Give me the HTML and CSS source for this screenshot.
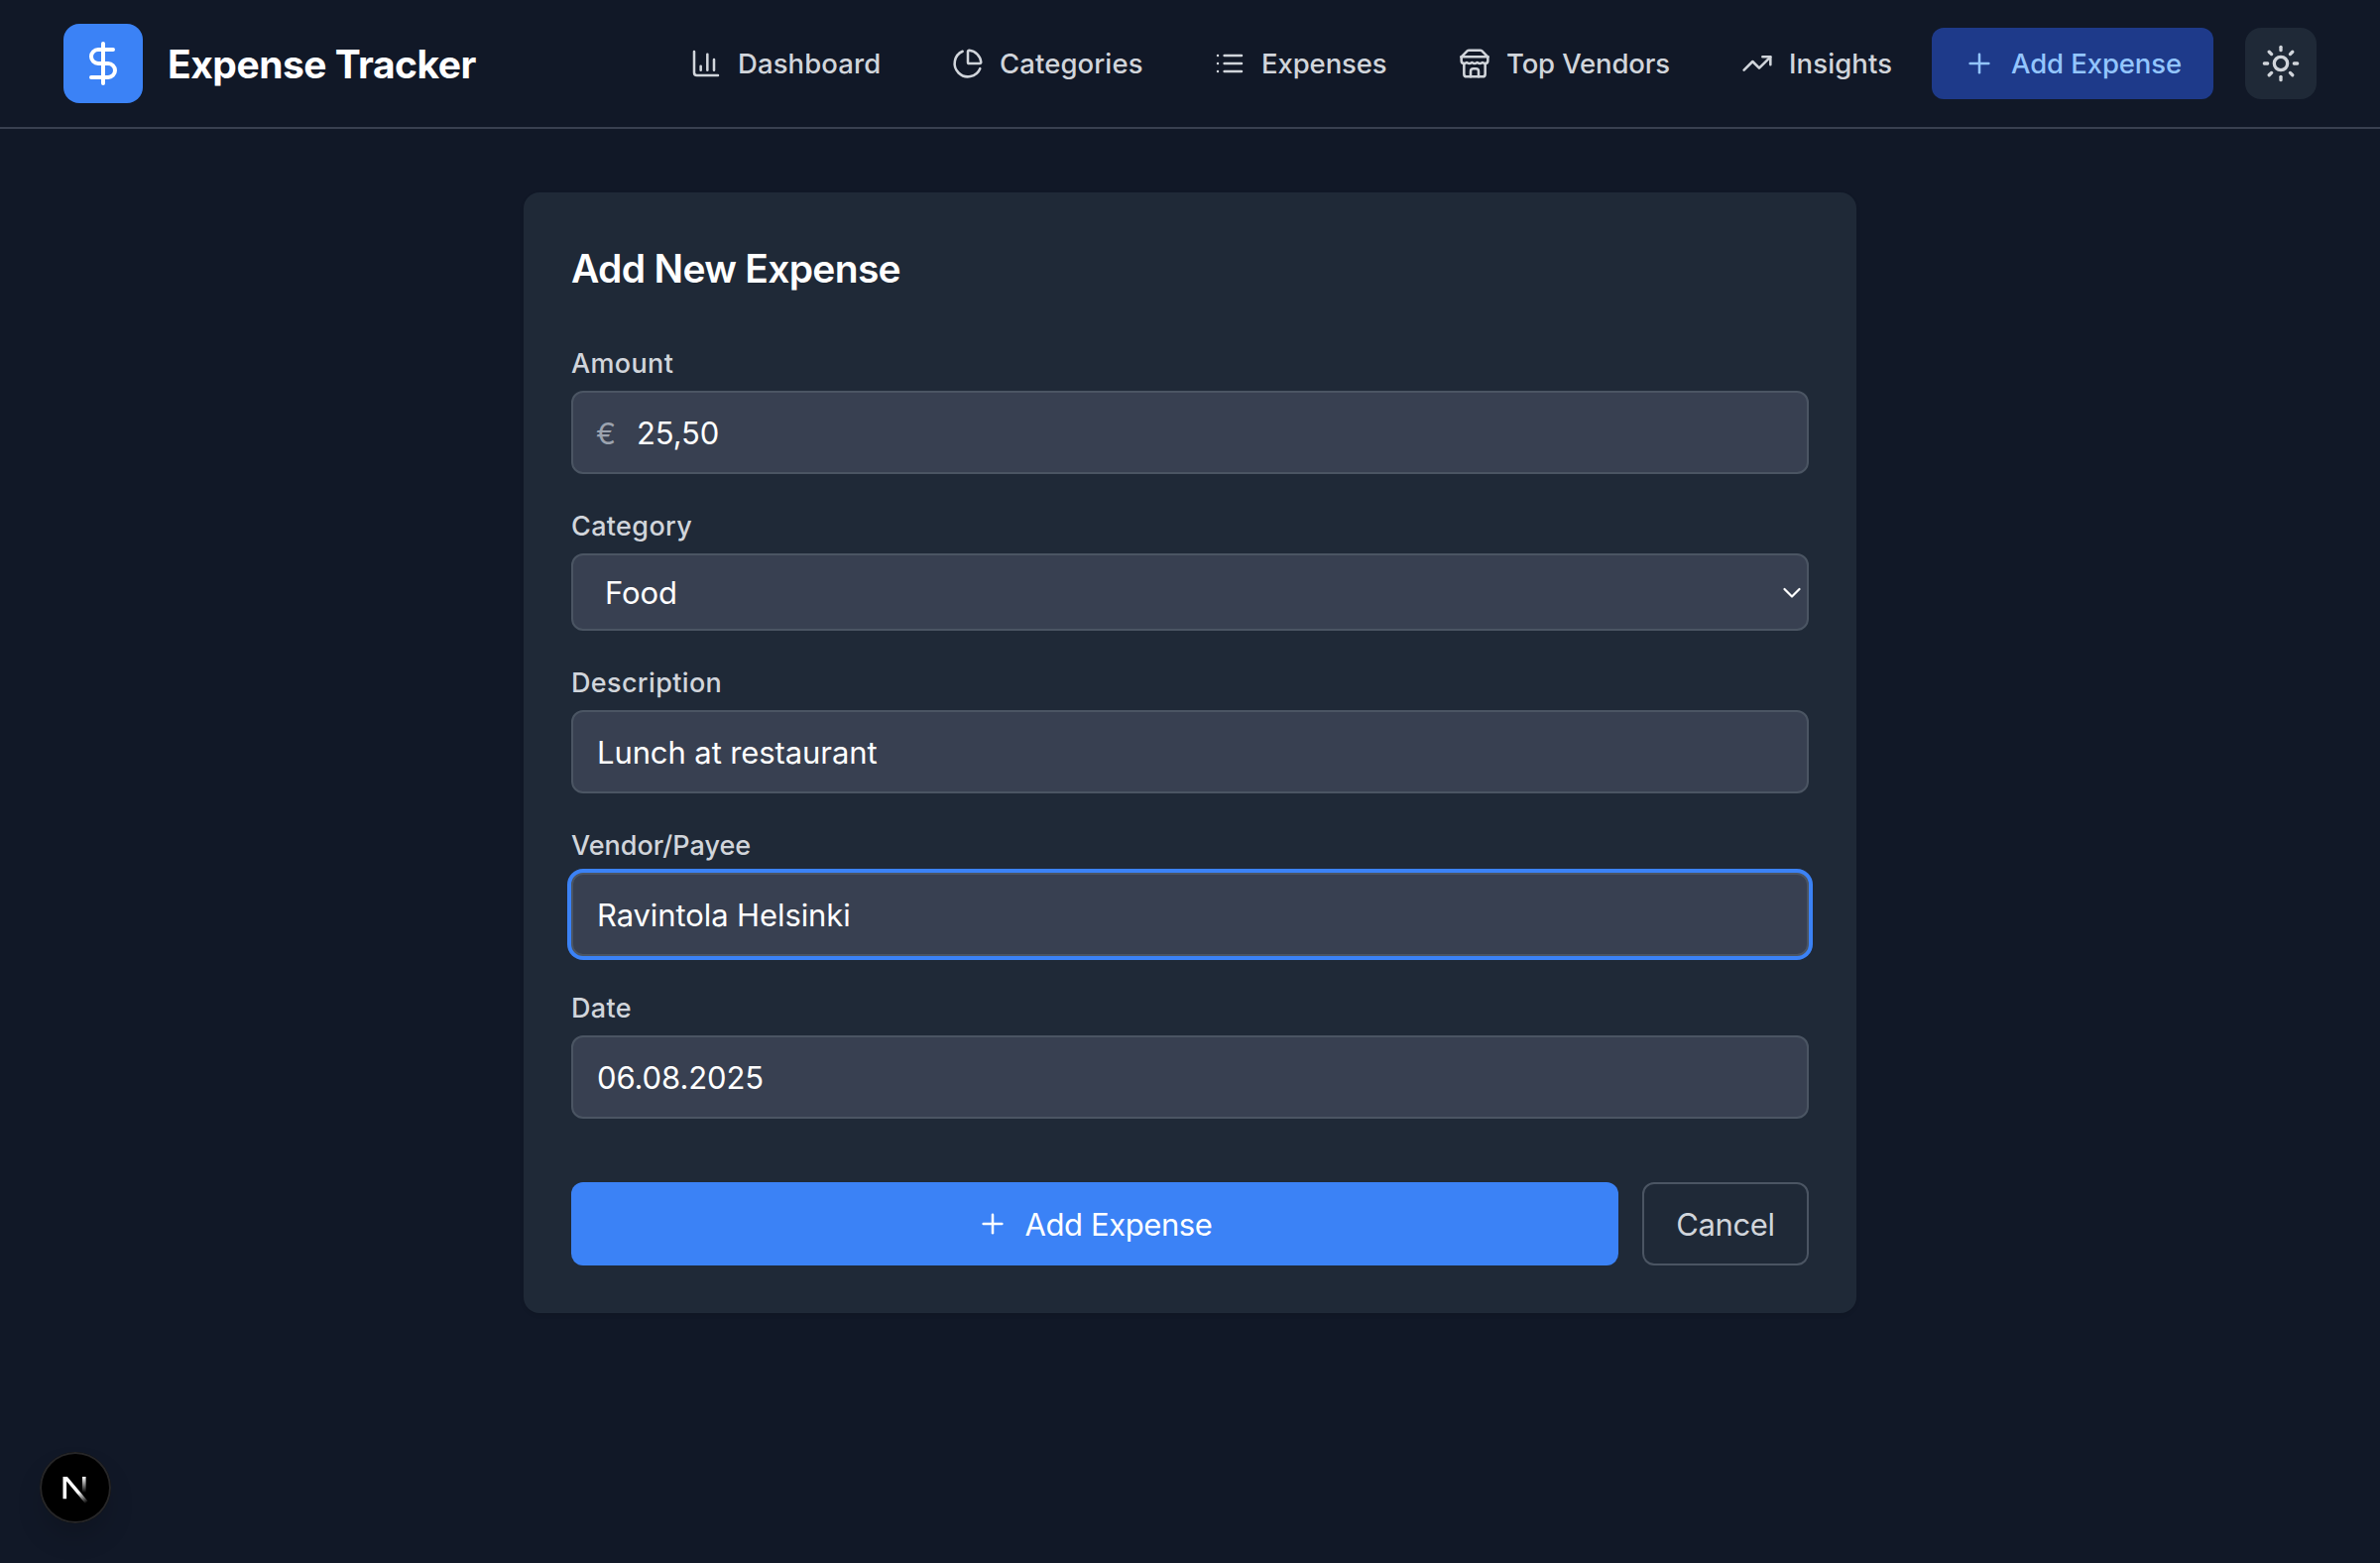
FILE: index.html
```html
<!DOCTYPE html>
<html lang="en">
<head>
<meta charset="utf-8">
<title>Expense Tracker</title>
<link rel="stylesheet" href="styles.css">
</head>
<body>
<header class="header">
  <div class="brand">
    <span class="brand-mark">
      <svg class="icon icon-lg" viewBox="0 0 24 24"><path d="M12 2v20"/><path d="M17 5H9.5a3.5 3.5 0 0 0 0 7h5a3.5 3.5 0 0 1 0 7H6"/></svg>
    </span>
    <span class="brand-name">Expense Tracker</span>
  </div>
  <nav class="nav">
    <a class="nav-link">
      <svg class="icon" viewBox="0 0 24 24"><path d="M3 3v16a2 2 0 0 0 2 2h16"/><path d="M18 17V9"/><path d="M13 17V5"/><path d="M8 17v-3"/></svg>
      <span class="nav-text dashboard">Dashboard</span>
    </a>
    <a class="nav-link">
      <svg class="icon" viewBox="0 0 24 24"><path d="M21 12c.552 0 1.005-.449.95-.998a10 10 0 0 0-8.953-8.951c-.55-.055-.998.398-.998.95v8a1 1 0 0 0 1 1z"/><path d="M21.21 15.89A10 10 0 1 1 8 2.83"/></svg>
      <span class="nav-text categories">Categories</span>
    </a>
    <a class="nav-link">
      <svg class="icon" viewBox="0 0 24 24"><path d="M3 12h.01"/><path d="M3 18h.01"/><path d="M3 6h.01"/><path d="M8 12h13"/><path d="M8 18h13"/><path d="M8 6h13"/></svg>
      <span class="nav-text expenses">Expenses</span>
    </a>
    <a class="nav-link">
      <svg class="icon" viewBox="0 0 24 24"><path d="m2 7 4.41-4.41A2 2 0 0 1 7.83 2h8.34a2 2 0 0 1 1.42.59L22 7"/><path d="M4 12v8a2 2 0 0 0 2 2h12a2 2 0 0 0 2-2v-8"/><path d="M15 22v-4a2 2 0 0 0-2-2h-2a2 2 0 0 0-2 2v4"/><path d="M2 7h20"/><path d="M22 7v3a2 2 0 0 1-2 2a2.7 2.7 0 0 1-1.59-.63.7.7 0 0 0-.82 0A2.7 2.7 0 0 1 16 12a2.7 2.7 0 0 1-1.59-.63.7.7 0 0 0-.82 0A2.7 2.7 0 0 1 12 12a2.7 2.7 0 0 1-1.59-.63.7.7 0 0 0-.82 0A2.7 2.7 0 0 1 8 12a2.7 2.7 0 0 1-1.59-.63.7.7 0 0 0-.82 0A2.7 2.7 0 0 1 4 12a2 2 0 0 1-2-2V7"/></svg>
      <span class="nav-text vendors">Top Vendors</span>
    </a>
    <a class="nav-link">
      <svg class="icon" viewBox="0 0 24 24"><path d="M16 7h6v6"/><path d="m22 7-8.5 8.5-5-5L2 17"/></svg>
      <span class="nav-text insights">Insights</span>
    </a>
    <a class="nav-link active">
      <svg class="icon" viewBox="0 0 24 24"><path d="M5 12h14"/><path d="M12 5v14"/></svg>
      <span class="nav-text add">Add Expense</span>
    </a>
    <button class="theme-toggle" type="button" aria-label="Toggle theme">
      <svg class="icon icon-md" viewBox="0 0 24 24"><circle cx="12" cy="12" r="4"/><path d="M12 2v2"/><path d="M12 20v2"/><path d="m4.93 4.93 1.41 1.41"/><path d="m17.66 17.66 1.41 1.41"/><path d="M2 12h2"/><path d="M20 12h2"/><path d="m6.34 17.66-1.41 1.41"/><path d="m19.07 4.93-1.41 1.41"/></svg>
    </button>
  </nav>
</header>

<main class="main">
  <form class="card">
    <h1 class="title">Add New Expense</h1>
    <div class="field">
      <label class="label" for="amount">Amount</label>
      <div class="control">
        <span class="prefix">€</span>
        <input class="input" id="amount" type="text" value="25,50">
      </div>
    </div>
    <div class="field">
      <label class="label" for="category">Category</label>
      <div class="control control-select">
        <select class="input" id="category"><option>Food</option></select>
        <svg class="chevron" viewBox="0 0 18 12"><path d="M1.500 2l7.500 7.500 7.500-7.500"/></svg>
      </div>
    </div>
    <div class="field">
      <label class="label" for="description">Description</label>
      <div class="control"><input class="input" id="description" type="text" value="Lunch at restaurant"></div>
    </div>
    <div class="field">
      <label class="label label-vendor" for="vendor">Vendor/Payee</label>
      <div class="control focused"><input class="input" id="vendor" type="text" value="Ravintola Helsinki"></div>
    </div>
    <div class="field">
      <label class="label" for="date">Date</label>
      <div class="control"><input class="input" id="date" type="text" value="06.08.2025"></div>
    </div>
    <div class="actions">
      <button class="btn btn-primary" type="button">
        <svg class="icon" viewBox="0 0 24 24"><path d="M5 12h14"/><path d="M12 5v14"/></svg>
        <span class="btn-text">Add Expense</span>
      </button>
      <button class="btn btn-outline" type="button"><span class="btn-text">Cancel</span></button>
    </div>
  </form>
</main>

<div class="dev-badge">
  <svg class="dev-logo" viewBox="0 0 72 72">
    <defs>
      <linearGradient id="diag" gradientUnits="userSpaceOnUse" x1="40" y1="40" x2="48" y2="51"><stop offset="0" stop-color="#fff"/><stop offset="1" stop-color="#fff" stop-opacity="0"/></linearGradient>
      <linearGradient id="stem" gradientUnits="userSpaceOnUse" x1="0" y1="25" x2="0" y2="41"><stop offset="0" stop-color="#fff"/><stop offset="1" stop-color="#fff" stop-opacity="0"/></linearGradient>
    </defs>
    <path d="M23.500 47.300V25h4.400L48.500 49.600 46 52 27.100 29.500V47.300z" fill="url(#diag)"/>
    <path d="M43 25h3.600v16h-3.600z" fill="url(#stem)"/>
  </svg>
</div>
</body>
</html>
```

FILE: styles.css
```css
* { box-sizing: border-box; }

body {
  margin: 0;
  min-height: 1576px;
  background: #111827;
  color: #fff;
  font-family: Inter, "Liberation Sans", sans-serif;
}

.icon {
  width: 32px;
  height: 32px;
  flex: none;
  fill: none;
  stroke: currentColor;
  stroke-width: 1.9;
  stroke-linecap: round;
  stroke-linejoin: round;
}
.icon-md { width: 40px; height: 40px; stroke-width: 2; }
.icon-lg { width: 48px; height: 48px; stroke-width: 2; }

.header {
  display: flex;
  align-items: center;
  justify-content: space-between;
  height: 130px;
  padding: 0 64px;
  border-bottom: 2px solid #394050;
}
.brand { display: flex; align-items: center; gap: 25px; }
.brand-mark {
  display: flex;
  align-items: center;
  justify-content: center;
  width: 80px;
  height: 80px;
  border-radius: 16px;
  background: #3b82f6;
}
.brand-name {
  padding-top: 2px;
  font-size: 39px;
  font-weight: 700;
  line-height: 56px;
  letter-spacing: -0.5px;
  white-space: nowrap;
}

.nav { display: flex; align-items: center; gap: 8px; }
.nav-link {
  display: flex;
  align-items: center;
  gap: 16px;
  height: 72px;
  padding: 0 32px;
  border-radius: 12px;
  color: #d1d5db;
}
.nav-link.active { background: #1e3a8a; color: #93c5fd; }
.nav-text {
  font-size: 27.5px;
  font-weight: 500;
  line-height: 40px;
  letter-spacing: 0.1px;
  white-space: nowrap;
}
.dashboard { width: 144px; }
.categories { width: 144px; }
.expenses { width: 127px; letter-spacing: -0.1px; }
.vendors { width: 165px; letter-spacing: -0.15px; }
.insights { width: 104px; }
.add { width: 172px; letter-spacing: -0.1px; }
.theme-toggle {
  display: flex;
  align-items: center;
  justify-content: center;
  width: 72px;
  height: 72px;
  margin-left: 24px;
  padding: 0;
  border: 0;
  border-radius: 16px;
  background: #1f2937;
  color: #d1d5db;
}

.main { display: flex; justify-content: center; padding-top: 64px; }
.card {
  display: flex;
  flex-direction: column;
  gap: 32px;
  width: 1344px;
  padding: 48px;
  border-radius: 16px;
  background: #1f2937;
  box-shadow: 0 2px 4px rgba(0, 0, 0, 0.1);
}
.title {
  margin: 0 0 15px;
  padding-top: 1px;
  font-size: 39px;
  font-weight: 600;
  line-height: 56px;
  letter-spacing: -0.7px;
}
.field { display: flex; flex-direction: column; gap: 7px; }
.label {
  padding-top: 1px;
  font-size: 27px;
  font-weight: 500;
  line-height: 40px;
  letter-spacing: 0.35px;
  color: #d1d5db;
}
.label-vendor { letter-spacing: 0; }
.control {
  display: flex;
  align-items: center;
  height: 84px;
  padding: 2px 24px 0;
  border: 2px solid #4b5563;
  border-radius: 12px;
  background: #384051;
}
.control-select { height: 78px; padding: 2px 6px 0 32px; }
.focused { box-shadow: 0 0 0 4px #3b82f6; }
.prefix { width: 41px; margin-left: -1px; color: #9ca3af; font-size: 30px; }
.input {
  flex: 1;
  min-width: 0;
  height: 48px;
  padding: 0;
  border: 0;
  outline: 0;
  appearance: none;
  background: transparent;
  color: #fff;
  font-family: inherit;
  font-size: 31px;
  line-height: 48px;
  letter-spacing: -0.1px;
}
.chevron {
  width: 18px;
  height: 12px;
  fill: none;
  stroke: #fff;
  stroke-width: 2.2;
  stroke-linecap: round;
  stroke-linejoin: round;
}

.actions { display: flex; gap: 24px; margin-top: 32px; }
.btn {
  display: flex;
  align-items: center;
  justify-content: center;
  gap: 16px;
  height: 84px;
  padding: 0;
  border: 0;
  border-radius: 12px;
  font-family: inherit;
  font-size: 31px;
  line-height: 48px;
  letter-spacing: -0.4px;
  white-space: nowrap;
}
.btn-text { padding-top: 2px; }
.btn-primary { flex: 1; background: #3b82f6; color: #fff; }
.btn-outline { width: 168px; border: 2px solid #4b5563; background: transparent; color: #d1d5db; }

/* Floating badge over the page corner */
.dev-badge {
  position: absolute;
  left: 40px;
  top: 1464px;
  width: 72px;
  height: 72px;
  border-radius: 50%;
  background: #000;
  box-shadow: inset 0 0 0 2px #262628, 0 16px 32px -8px rgba(0, 0, 0, 0.24);
}
.dev-logo { display: block; width: 72px; height: 72px; }
```
